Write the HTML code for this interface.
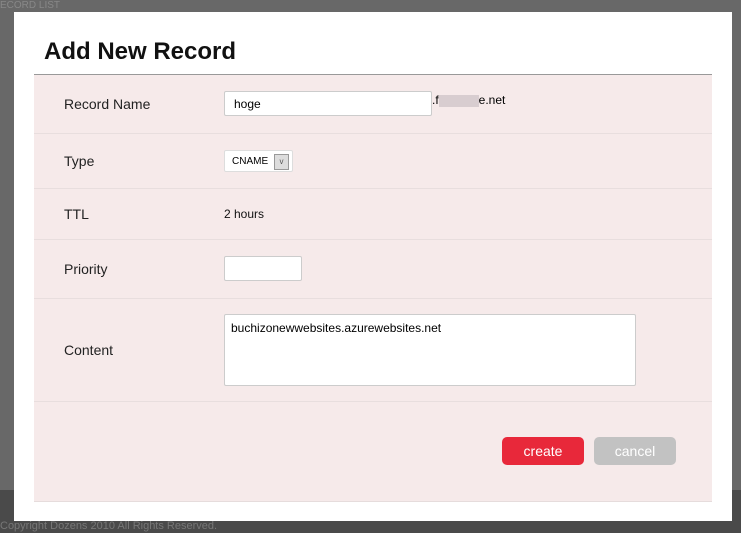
<!DOCTYPE html>
<html><head><style>
body{margin:0;width:741px;height:533px;background:#686868;position:relative;overflow:hidden;font-family:"Liberation Sans",Arial,sans-serif;}
.bot{position:absolute;left:0;top:490px;width:741px;height:43px;background:#4a4a4a;}
.foot{position:absolute;left:0;top:520px;font-size:11px;color:#777;}
.bg1{position:absolute;left:0;top:0;font-size:10px;color:#888;}
.modal{position:absolute;left:14px;top:12px;width:718px;height:509px;background:#fff;}
h1{position:absolute;left:30px;top:26px;margin:0;font-size:24px;font-weight:bold;color:#111;}
.panel{position:absolute;left:20px;top:62px;width:678px;height:426px;background:#f6eaea;border-top:1px solid #999;border-bottom:1px solid #e6dcdc;}
.row{position:absolute;left:0;width:678px;border-bottom:1px solid #e8dede;}
.lab{position:absolute;left:30px;font-size:14px;color:#222;}
.val{position:absolute;left:190px;font-size:12px;color:#111;}
.inp{position:absolute;background:#fff;border:1px solid #ccc;border-radius:2px;box-sizing:border-box;}
.btn{position:absolute;top:362px;height:28px;width:82px;border-radius:5px;color:#fff;font-size:14px;text-align:center;line-height:28px;}
</style></head><body>
<div class="bg1">ECORD LIST</div>
<div class="bot"></div>
<div class="foot">Copyright Dozens 2010 All Rights Reserved.</div>
<div class="modal">
<h1>Add New Record</h1>
<div class="panel">
<div class="row" style="top:0;height:58px"><span class="lab" style="top:21px">Record Name</span>
<div class="inp" style="left:190px;top:16px;width:208px;height:25px;font-size:12px;padding:5px 9px">hoge</div>
<span style="position:absolute;left:398px;top:18px;font-size:12px">.f<span style="display:inline-block;width:40px;height:12px;background:#d8cdd0;vertical-align:middle"></span>e.net</span></div>
<div class="row" style="top:59px;height:54px"><span class="lab" style="top:19px">Type</span>
<div class="inp" style="left:190px;top:16px;width:69px;height:22px;border-color:#ddd;font-size:10px;padding:5px 7px">CNAME<span style="position:absolute;right:3px;top:3px;width:13px;height:14px;background:#ddd;border:1px solid #999;font-size:8px;line-height:14px;text-align:center;color:#555">v</span></div></div>
<div class="row" style="top:114px;height:50px"><span class="lab" style="top:17px">TTL</span><span class="val" style="top:18px">2 hours</span></div>
<div class="row" style="top:165px;height:58px"><span class="lab" style="top:21px">Priority</span>
<div class="inp" style="left:190px;top:16px;width:78px;height:25px"></div></div>
<div class="row" style="top:224px;height:102px"><span class="lab" style="top:43px">Content</span>
<div class="inp" style="left:190px;top:15px;width:412px;height:72px;font-size:12px;padding:6px 6px">buchizonewwebsites.azurewebsites.net</div></div>
<div class="btn" style="left:468px;background:#e8283a">create</div>
<div class="btn" style="left:560px;background:#c2c2c2">cancel</div>
</div>
</div>
</body></html>
